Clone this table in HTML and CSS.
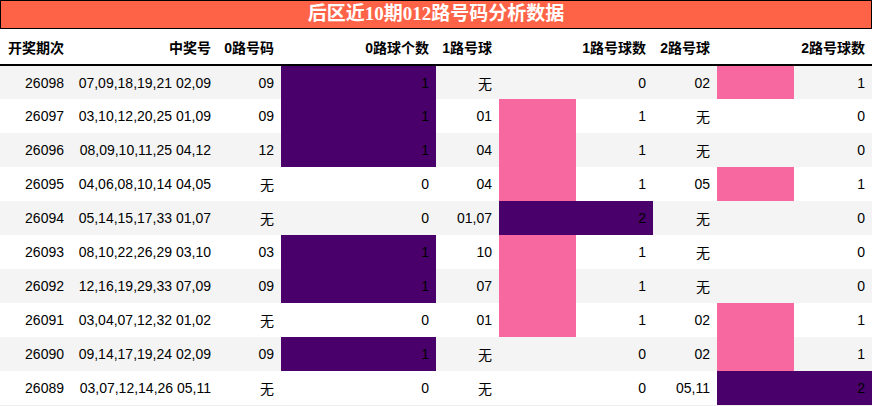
FILE: index.html
```html
<!DOCTYPE html>
<html lang="zh">
<head>
<meta charset="utf-8">
<title>后区近10期012路号码分析数据</title>
<link rel="stylesheet" href="styles.css">
</head>
<body>
<div class="title">后区近10期012路号码分析数据</div>
<table class="data">
  <colgroup>
    <col class="c1"><col class="c2"><col class="c3"><col class="c4">
    <col class="c5"><col class="c6"><col class="c7"><col class="c8">
  </colgroup>
  <thead>
    <tr><th>开奖期次</th><th>中奖号</th><th>0路号码</th><th>0路球个数</th><th>1路号球</th><th>1路号球数</th><th>2路号球</th><th>2路号球数</th></tr>
  </thead>
  <tbody>
    <tr><td>26098</td><td>07,09,18,19,21 02,09</td><td>09</td><td class="bar dark" style="--w:100%">1</td><td>无</td><td class="bar">0</td><td>02</td><td class="bar pink" style="--w:50%">1</td></tr>
    <tr><td>26097</td><td>03,10,12,20,25 01,09</td><td>09</td><td class="bar dark" style="--w:100%">1</td><td>01</td><td class="bar pink" style="--w:50%">1</td><td>无</td><td class="bar">0</td></tr>
    <tr><td>26096</td><td>08,09,10,11,25 04,12</td><td>12</td><td class="bar dark" style="--w:100%">1</td><td>04</td><td class="bar pink" style="--w:50%">1</td><td>无</td><td class="bar">0</td></tr>
    <tr><td>26095</td><td>04,06,08,10,14 04,05</td><td>无</td><td class="bar">0</td><td>04</td><td class="bar pink" style="--w:50%">1</td><td>05</td><td class="bar pink" style="--w:50%">1</td></tr>
    <tr><td>26094</td><td>05,14,15,17,33 01,07</td><td>无</td><td class="bar">0</td><td>01,07</td><td class="bar dark" style="--w:100%">2</td><td>无</td><td class="bar">0</td></tr>
    <tr><td>26093</td><td>08,10,22,26,29 03,10</td><td>03</td><td class="bar dark" style="--w:100%">1</td><td>10</td><td class="bar pink" style="--w:50%">1</td><td>无</td><td class="bar">0</td></tr>
    <tr><td>26092</td><td>12,16,19,29,33 07,09</td><td>09</td><td class="bar dark" style="--w:100%">1</td><td>07</td><td class="bar pink" style="--w:50%">1</td><td>无</td><td class="bar">0</td></tr>
    <tr><td>26091</td><td>03,04,07,12,32 01,02</td><td>无</td><td class="bar">0</td><td>01</td><td class="bar pink" style="--w:50%">1</td><td>02</td><td class="bar pink" style="--w:50%">1</td></tr>
    <tr><td>26090</td><td>09,14,17,19,24 02,09</td><td>09</td><td class="bar dark" style="--w:100%">1</td><td>无</td><td class="bar">0</td><td>02</td><td class="bar pink" style="--w:50%">1</td></tr>
    <tr><td>26089</td><td>03,07,12,14,26 05,11</td><td>无</td><td class="bar">0</td><td>无</td><td class="bar">0</td><td>05,11</td><td class="bar dark" style="--w:100%">2</td></tr>
  </tbody>
</table>
</body>
</html>
```
FILE: styles.css
```css
html, body {
  margin: 0;
  padding: 0;
  background: #ffffff;
}
body {
  width: 872px;
  font-family: "Liberation Sans", "Noto Sans CJK SC", sans-serif;
  color: #000;
}
.title {
  box-sizing: border-box;
  height: 29px;
  background: #ff6347;
  border: 1px solid #000;
  color: #fff;
  font-family: "Liberation Serif", "Noto Sans CJK SC", serif;
  font-weight: bold;
  font-size: 19px;
  line-height: 26px;
  text-align: center;
}
.data {
  width: 872px;
  border-collapse: collapse;
  table-layout: fixed;
  font-size: 14px;
}
.c1 { width: 71px; }
.c2 { width: 147px; }
.c3 { width: 63px; }
.c4 { width: 155px; }
.c5 { width: 63px; }
.c6 { width: 154px; }
.c7 { width: 64px; }
.c8 { width: 155px; }
.data th,
.data td {
  height: 34px;
  padding: 0 7px 0 0;
  text-align: right;
  vertical-align: middle;
  white-space: nowrap;
  box-sizing: border-box;
}
.data th {
  height: 36px;
  padding-top: 1px;
  font-weight: bold;
  border-bottom: 2px solid #000;
}
.data tbody tr:nth-child(odd) {
  background: #f4f4f4;
}
.data tbody tr:last-child td {
  border-bottom: 1px solid #eeeeee;
}
.bar {
  --w: 0%;
  --c: transparent;
  background: linear-gradient(90deg, var(--c) var(--w), transparent var(--w));
}
.bar.pink { --c: #f768a1; }
.bar.dark { --c: #49006a; }
```
